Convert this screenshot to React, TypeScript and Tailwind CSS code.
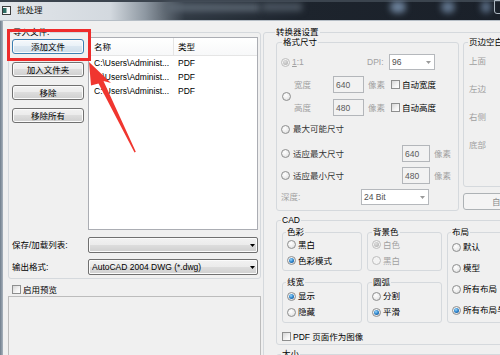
import React from 'react';

const dis = 'text-[#a0a0a0]';

const Radio: React.FC<{ checked?: boolean; disabled?: boolean }> = ({ checked = false, disabled = false }) => (
    <span
        className={`w-[9px] h-[9px] shrink-0 rounded-full border flex items-center justify-center ${
            disabled
                ? 'border-[#bdbdbd] bg-[#f3f3f3]'
                : 'border-[#8e8f8f] bg-[radial-gradient(circle_at_40%_35%,#ffffff_0%,#ececec_55%,#d2d2d2_100%)]'
        }`}
    >
        {checked && (
            <span
                className={`w-[5px] h-[5px] rounded-full ${
                    disabled
                        ? 'bg-[radial-gradient(circle_at_40%_35%,#e0e0e0_0%,#a8a8a8_100%)]'
                        : 'bg-[radial-gradient(circle_at_40%_35%,#9ad6fb_0%,#2c84cc_50%,#0c3f7c_100%)]'
                }`}
            />
        )}
    </span>
);

const Check: React.FC = () => (
    <span className="w-[9px] h-[9px] shrink-0 border border-[#8e8f8f] bg-[linear-gradient(135deg,#d6d6d6_0%,#f4f4f4_60%,#ffffff_100%)]" />
);

const GroupBox: React.FC<{
    label: string;
    className: string;
    legendClass: string;
    children?: React.ReactNode;
}> = ({ label, className, legendClass, children }) => (
    <fieldset className={`shrink-0 border border-[#d5d9dd] rounded-[3px] ${className}`}>
        <legend className={`px-[1px] h-[10px] leading-[10px] ${legendClass}`}>{label}</legend>
        {children}
    </fieldset>
);

const WinButton: React.FC<{ focused?: boolean; children: React.ReactNode }> = ({ focused = false, children }) => (
    <div
        className={`h-[15px] w-[72px] rounded-[3px] border flex items-center justify-center shadow-[inset_0_0_0_1px_#fbfbfb] ${
            focused
                ? 'border-[#3c7fb1] bg-[linear-gradient(#f5f9fc_0%,#e9f1f7_49%,#dbe7f1_50%,#cfdeea_100%)]'
                : 'border-[#707070] bg-[linear-gradient(#f2f2f2_0%,#ebebeb_49%,#dddddd_50%,#cfcfcf_100%)]'
        }`}
    >
        {children}
    </div>
);

const Combo: React.FC<{ text?: string }> = ({ text }) => (
    <div className="w-[170px] h-[16px] shrink-0 flex items-center rounded-[2px] border border-[#707070] pl-[3px] bg-[linear-gradient(#f2f2f2_0%,#ebebeb_49%,#dddddd_50%,#cfcfcf_100%)] shadow-[inset_0_0_0_1px_#fbfbfb]">
        <span className="flex-1 truncate">{text}</span>
        <svg width="5" height="3" viewBox="0 0 5 3" className="mr-[2px]">
            <path d="M0 0H5L2.5 3Z" fill="#000" />
        </svg>
    </div>
);

const SmallCombo: React.FC<{ text: string; className: string }> = ({ text, className }) => (
    <div className={`h-[16px] shrink-0 flex items-center border border-[#b5b8bc] bg-white pl-[2px] ${className}`}>
        <span className="flex-1 text-[#505050]">{text}</span>
        <svg width="5" height="3" viewBox="0 0 5 3" className="mr-[3px]">
            <path d="M0 0H5L2.5 3Z" fill="#9a9a9a" />
        </svg>
    </div>
);

const TextBox: React.FC<{ text: string; className: string }> = ({ text, className }) => (
    <div className={`h-[17px] shrink-0 flex items-center border border-[#b3b6ba] bg-[#f2f2f2] pl-[2px] text-[#5a5a5a] ${className}`}>
        {text}
    </div>
);

const TitleBar: React.FC = () => (
    <div className="relative h-[20px] overflow-hidden bg-[linear-gradient(to_right,#e2e6ea_0%,#d3d9df_22%,#8e98a2_29%,#313a44_37%,#1d242d_60%,#1a2029_100%)]">
        <div className="absolute top-0 left-0 right-0 h-[2px] bg-[#3b444e]" />
        <div className="absolute left-[165px] top-[4px] w-[95px] h-[7px] bg-[#5d6874] blur-[3px]" />
        <div className="absolute left-[262px] top-[3px] w-[40px] h-[8px] bg-[#4c5662] blur-[3px]" />
        <div className="absolute left-[390px] top-[1px] w-[16px] h-[12px] rounded-full bg-[#6c819a] blur-[3px]" />
        <div className="absolute left-[441px] top-[1px] w-[14px] h-[12px] rounded-full bg-[#62768e] blur-[3px]" />
        <div className="absolute left-[481px] top-[1px] w-[10px] h-[12px] rounded-full bg-[#5b6e86] blur-[3px]" />
        <div className="absolute left-[494px] top-0 w-[10px] h-[14px] rounded-bl-[3px] border border-[#aeb8c2]" />
        <div className="relative flex items-center h-full pl-[2px] gap-[6px]">
            <svg width="9" height="9" viewBox="0 0 9 9">
                <rect x="0.5" y="0.5" width="8" height="8" fill="#f8f8f8" stroke="#3d3d3d" />
                <rect x="1" y="2" width="3.5" height="5" fill="#2f6f66" />
            </svg>
            <span className="text-[#111]">批处理</span>
        </div>
    </div>
);

const LeftPane: React.FC = () => (
    <div className="w-[259px] shrink-0 flex flex-col">
        <GroupBox label="导入文件:" className="ml-[5px] mt-[6px] w-[253px] h-[252px]" legendClass="ml-[3px]">
            <div className="flex pl-[3px]">
                <div className="flex flex-col gap-[8px] mt-[2px]">
                    <WinButton focused>添加文件</WinButton>
                    <WinButton>加入文件夹</WinButton>
                    <WinButton>移除</WinButton>
                    <WinButton>移除所有</WinButton>
                </div>
                <div className="ml-[4px] w-[170px] h-[193px] border border-[#abadb3] bg-white">
                    <div className="h-[18px] flex border-b border-[#e5e5e5] bg-[linear-gradient(#ffffff,#f7f8f9)]">
                        <div className="w-[85px] pl-[5px] flex items-center border-r border-[#e5e5e5]">名称</div>
                        <div className="pl-[4px] flex items-center">类型</div>
                    </div>
                    {[0, 1, 2].map((i) => (
                        <div key={i} className="h-[14px] flex items-center">
                            <span className="w-[85px] pl-[5px] whitespace-nowrap">C:\Users\Administ...</span>
                            <span className="pl-[4px]">PDF</span>
                        </div>
                    ))}
                </div>
            </div>
            <div className="flex items-center mt-[7px] pl-[3px]">
                <span className="w-[76px]">保存/加载列表:</span>
                <Combo />
            </div>
            <div className="flex items-center mt-[6px] pl-[3px]">
                <span className="w-[76px]">输出格式:</span>
                <Combo text="AutoCAD 2004 DWG (*.dwg)" />
            </div>
        </GroupBox>
        <div className="flex items-center mt-[6px] pl-[9px] h-[9px]">
            <Check />
            <span className="ml-[2px]">启用预览</span>
        </div>
        <div className="mt-[2px] ml-[5px] w-[253px] h-[80px] shrink-0 border border-[#bcbcbc]" />
    </div>
);

const SizeRow: React.FC<{ label: string; value: string; auto: string }> = ({ label, value, auto }) => (
    <div className="h-[17px] flex items-center">
        <span className={`w-[39px] ${dis}`}>{label}</span>
        <TextBox text={value} className="w-[31px]" />
        <span className={`ml-[4px] w-[23px] ${dis}`}>像素</span>
        <Check />
        <span className="ml-[2px]">{auto}</span>
    </div>
);

const FormatSize: React.FC = () => (
    <GroupBox label="格式尺寸" className="w-[183px] h-[174px]" legendClass="ml-[5px]">
        <div className="flex flex-col">
            <div className="mt-[7px] h-[16px] flex items-center">
                <div className="w-[90px] flex items-center pl-[4px]">
                    <Radio checked disabled />
                    <span className={`ml-[2px] ${dis}`}>
                        <u>1</u>:1
                    </span>
                </div>
                <span className={`w-[22px] ${dis}`}>DPI:</span>
                <SmallCombo text="96" className="w-[46px]" />
            </div>
            <div className="mt-[6px] flex items-center">
                <span className="ml-[5px]">
                    <Radio />
                </span>
                <div className="ml-[3px] flex flex-col gap-[6px]">
                    <SizeRow label="宽度" value="640" auto="自动宽度" />
                    <SizeRow label="高度" value="480" auto="自动高度" />
                </div>
            </div>
            <div className="mt-[5px] h-[16px] flex items-center pl-[4px]">
                <Radio />
                <span className="ml-[3px] text-[#333]">最大可能尺寸</span>
            </div>
            <div className="mt-[8px] h-[17px] flex items-center pl-[4px]">
                <Radio />
                <span className="ml-[3px] w-[109px] text-[#333]">适应最大尺寸</span>
                <TextBox text="640" className="w-[28px]" />
                <span className={`ml-[4px] ${dis}`}>像素</span>
            </div>
            <div className="mt-[5px] h-[17px] flex items-center pl-[4px]">
                <Radio />
                <span className="ml-[3px] w-[109px] text-[#333]">适应最小尺寸</span>
                <TextBox text="480" className="w-[28px]" />
                <span className={`ml-[4px] ${dis}`}>像素</span>
            </div>
            <div className="mt-[5px] h-[16px] flex items-center pl-[4px]">
                <span className={`w-[80px] ${dis}`}>深度:</span>
                <SmallCombo text="24 Bit" className="w-[68px]" />
            </div>
        </div>
    </GroupBox>
);

const Margins: React.FC = () => (
    <div className="ml-[4px] flex flex-col">
        <GroupBox label="页边空白" className="w-[80px] h-[150px]" legendClass="ml-[4px]">
            <div className={`flex flex-col pl-[5px] pt-[8px] gap-[16px] ${dis}`}>
                {['上面', '左边', '右侧', '底部'].map((t) => (
                    <div key={t} className="h-[12px] flex items-center">
                        {t}
                    </div>
                ))}
            </div>
        </GroupBox>
        <div className="mt-[6px] h-[17px] w-[80px] rounded-[3px] border border-[#adb2b5] bg-[#f4f4f4] flex items-center pl-[28px] text-[#8a8a8a]">
            自定义
        </div>
    </div>
);

const Option: React.FC<{ label: string; checked?: boolean; disabled?: boolean }> = ({ label, checked, disabled }) => (
    <div className="h-[13px] flex items-center pl-[4px]">
        <Radio checked={checked} disabled={disabled} />
        <span className={`ml-[2px] whitespace-nowrap ${disabled ? dis : ''}`}>{label}</span>
    </div>
);

const CadGroup: React.FC = () => (
    <GroupBox label="CAD" className="ml-[12px] mt-[4px] w-[240px] h-[130px]" legendClass="ml-[4px]">
        <div className="flex items-start">
            <div className="ml-[5px] mt-[2px] flex flex-col">
                <div className="flex gap-[5px]">
                    <GroupBox label="色彩" className="w-[80px] h-[44px]" legendClass="ml-[3px]">
                        <div className="mt-[1px] flex flex-col gap-[3px]">
                            <Option label="黑白" />
                            <Option label="色彩模式" checked />
                        </div>
                    </GroupBox>
                    <GroupBox label="背景色" className="w-[75px] h-[44px]" legendClass="ml-[4px]">
                        <div className="mt-[1px] flex flex-col gap-[3px]">
                            <Option label="白色" checked disabled />
                            <Option label="黑白" disabled />
                        </div>
                    </GroupBox>
                </div>
                <div className="flex gap-[5px] mt-[6px]">
                    <GroupBox label="线宽" className="w-[80px] h-[46px]" legendClass="ml-[3px]">
                        <div className="mt-[2.5px] flex flex-col gap-[3px]">
                            <Option label="显示" checked />
                            <Option label="隐藏" />
                        </div>
                    </GroupBox>
                    <GroupBox label="圆弧" className="w-[75px] h-[46px]" legendClass="ml-[4px]">
                        <div className="mt-[2.5px] flex flex-col gap-[3px]">
                            <Option label="分割" />
                            <Option label="平滑" checked />
                        </div>
                    </GroupBox>
                </div>
            </div>
            <GroupBox label="布局" className="ml-[5px] mt-[2px] w-[80px] h-[96px]" legendClass="ml-[3px]">
                <div className="mt-[3.5px] flex flex-col gap-[8px]">
                    <Option label="默认" />
                    <Option label="模型" />
                    <Option label="所有布局" />
                    <Option label="所有布局与模型" checked />
                </div>
            </GroupBox>
        </div>
        <div className="mt-[9px] ml-[5px] h-[9px] flex items-center">
            <Check />
            <span className="ml-[2px]">PDF 页面作为图像</span>
        </div>
    </GroupBox>
);

const RightPane: React.FC = () => (
    <div className="flex-1 min-w-0">
        <GroupBox label="转换器设置" className="ml-[1px] mt-[6px] w-[280px] h-[400px]" legendClass="ml-[11px]">
            <div className="flex items-start pl-[12px]">
                <FormatSize />
                <Margins />
            </div>
            <CadGroup />
            <GroupBox label="大小" className="ml-[12px] mt-[4px] w-[240px] h-[40px]" legendClass="ml-[4px]" />
        </GroupBox>
    </div>
);

const Annotation: React.FC = () => (
    <>
        <div className="absolute left-[7px] top-[29px] w-[84px] h-[32px] border-[3px] border-[#ee2b2b]" />
        <svg className="absolute left-0 top-0 pointer-events-none" width="500" height="355" viewBox="0 0 500 355">
            <polygon
                points="89,62 111,83 103.5,81 135.8,151.8 134.5,152.4 98.5,83.5 91,85.5"
                fill="#f0362f"
            />
        </svg>
    </>
);

export default function App() {
    return (
        <div className="relative w-[500px] h-[355px] overflow-hidden bg-[#f0f0f0] text-[8.5px] leading-[10px] text-black font-['Liberation_Sans','Noto_Sans_CJK_SC',sans-serif]">
            <TitleBar />
            <div className="flex h-[335px] border-t border-[#b6bec6]">
                <div className="w-[3px] shrink-0 bg-[linear-gradient(to_right,#6f7d8c,#a9b3bd)]" />
                <LeftPane />
                <RightPane />
            </div>
            <Annotation />
        </div>
    );
}
